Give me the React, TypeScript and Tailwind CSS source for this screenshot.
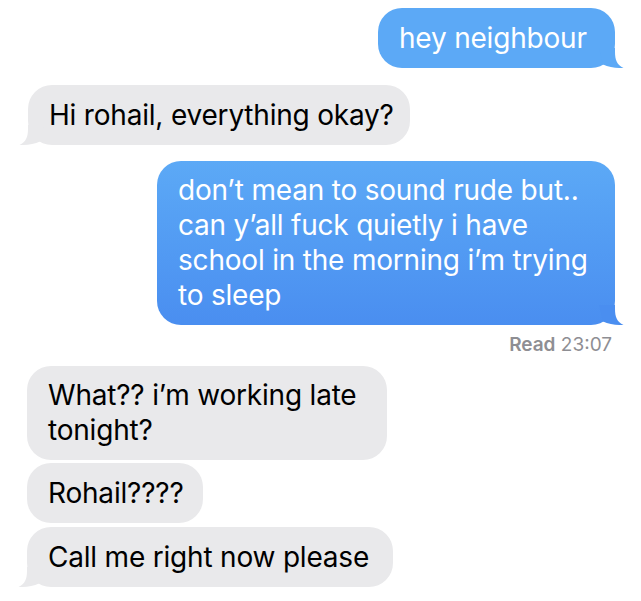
import React from "react";

type Side = "me" | "them";

function Tail({ side, color }: { side: Side; color: string }) {
  // little curled horn at the bottom corner of the last bubble in a group
  const pos = side === "me" ? "-right-[10px]" : "-left-[10px] -scale-x-100";
  return (
    <svg
      className={`absolute bottom-0 ${pos}`}
      width="26"
      height="20"
      viewBox="0 0 26 20"
    >
      <path
        d="M0 0 H16 V4 C16 12 18 17 24.5 19.8 C18 20.4 10 19.6 4 16.6 L0 0 Z"
        fill={color}
      />
    </svg>
  );
}

function Bubble({
  side,
  width,
  tail = false,
  multi = false,
  className = "",
  tailColor,
  children,
}: {
  side: Side;
  width: string;
  tail?: boolean;
  multi?: boolean;
  className?: string;
  tailColor?: string;
  children: React.ReactNode;
}) {
  const skin =
    side === "me" ? "bg-[#5ca9f6] text-white" : "bg-[#e9e9eb] text-black";
  const shape = multi ? "py-3" : "h-[60px] flex items-center";
  return (
    <div
      className={`relative ${width} ${skin} ${shape} rounded-[24px] pl-[21px] pr-3 text-[28px] leading-[35px] tracking-[-0.2px] whitespace-nowrap ${
        side === "me" ? "self-end" : "self-start"
      } ${className}`}
    >
      {tail && (
        <Tail
          side={side}
          color={tailColor ?? (side === "me" ? "#5ca9f6" : "#e9e9eb")}
        />
      )}
      <span className="relative">{children}</span>
    </div>
  );
}

export default function App() {
  return (
    <div
      className="w-[641px] h-[601px] bg-white overflow-hidden flex flex-col pt-2 pl-[28px] pr-[26px]"
      style={{ fontFamily: "Inter, 'Noto Sans', sans-serif" }}
    >
      <Bubble side="me" width="w-[237px]" tail>
        hey neighbour
      </Bubble>

      <Bubble side="them" width="w-[382px]" tail className="mt-[17px]">
        Hi rohail, everything okay?
      </Bubble>

      <Bubble
        side="me"
        width="w-[458px]"
        tail
        multi
        tailColor="#4a8ef0"
        className="mt-4 bg-gradient-to-b from-[#5ca9f6] to-[#4a8ef0]"
      >
        don’t mean to sound rude but..
        <br />
        can y’all fuck quietly i have
        <br />
        school in the morning i’m trying
        <br />
        to sleep
      </Bubble>

      <div className="self-end mt-[9px] mr-[3px] h-[22px] leading-[22px] text-[19px] text-[#8e8e93]">
        <span className="font-semibold">Read</span> 23:07
      </div>

      <Bubble side="them" width="w-[360px]" multi className="mt-[10px] -ml-px">
        What?? i’m working late
        <br />
        tonight?
      </Bubble>

      <Bubble side="them" width="w-[176px]" className="mt-[3px] -ml-px">
        Rohail????
      </Bubble>

      <Bubble side="them" width="w-[366px]" tail className="mt-1 -ml-px">
        Call me right now please
      </Bubble>
    </div>
  );
}
